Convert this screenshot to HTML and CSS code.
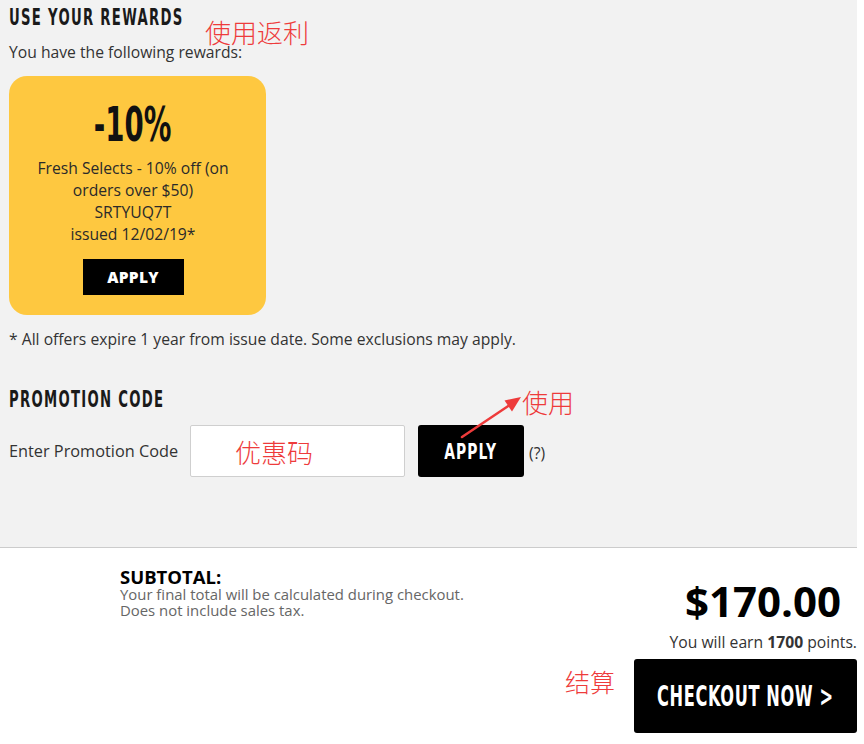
FILE: index.html
```html
<!DOCTYPE html>
<html lang="en">
<head>
<meta charset="utf-8">
<title>Cart</title>
<link rel="stylesheet" href="styles.css">
</head>
<body>
<div class="page">
  <section class="top">
    <h2 class="heading"><span class="cond cond-left">USE YOUR REWARDS</span></h2>
    <p class="intro">You have the following rewards:</p>
    <div class="card">
      <div class="pct"><span class="cond">-10%</span></div>
      <p class="desc">Fresh Selects - 10% off (on<br>orders over $50)<br>SRTYUQ7T<br>issued 12/02/19*</p>
      <button class="card-btn">APPLY</button>
    </div>
    <p class="note">* All offers expire 1 year from issue date. Some exclusions may apply.</p>
    <h2 class="heading promo-h"><span class="cond cond-left">PROMOTION CODE</span></h2>
    <div class="promo-row">
      <span class="label">Enter Promotion Code</span>
      <div class="input"><span class="ann ann-code">优惠码</span></div>
      <button class="promo-btn"><span class="cond">APPLY</span></button>
      <span class="help">(?)</span>
    </div>
    <span class="ann ann-rewards">使用返利</span>
    <span class="ann ann-use">使用</span>
    <svg class="arrow" width="70" height="50" viewBox="0 0 70 50">
      <line x1="7" y1="45" x2="54" y2="13.5" stroke="#ee3b3b" stroke-width="2.5" stroke-linecap="round"/>
      <polygon points="66,5 57,19.5 49.5,8.5" fill="#ee3b3b"/>
    </svg>
  </section>
  <section class="bottom">
    <div class="sub">
      <div class="sub-title">SUBTOTAL:</div>
      <div class="sub-text">Your final total will be calculated during checkout.<br>Does not include sales tax.</div>
    </div>
    <div class="totals">
      <div class="price">$170.00</div>
      <div class="earn">You will earn <b>1700</b> points.</div>
      <div class="checkout-row">
        <span class="ann-inline">结算</span>
        <button class="checkout"><span class="cond">CHECKOUT NOW &gt;</span></button>
      </div>
    </div>
  </section>
</div>
</body>
</html>
```

FILE: styles.css
```css
html, body {
  margin: 0;
  padding: 0;
  background: #ffffff;
}
body {
  font-family: "Open Sans", "DejaVu Sans", sans-serif;
  color: #222;
}
.page {
  width: 857px;
}
.top {
  position: relative;
  background: #f2f2f2;
  padding: 3px 9px 0;
  height: 544px;
  border-bottom: 1px solid #cccccc;
}
.cond {
  display: inline-block;
  font-family: "DejaVu Sans", sans-serif;
  font-stretch: condensed;
  font-weight: bold;
  white-space: nowrap;
  transform: scaleX(0.64);
  transform-origin: center;
}
.cond-left {
  transform-origin: left center;
}
.heading {
  margin: 0;
  font-size: 23px;
  line-height: 26px;
  letter-spacing: 2px;
  color: #1a1a1a;
  white-space: nowrap;
}
.intro {
  margin: 12px 0 0;
  font-size: 15.7px;
  line-height: 20px;
  color: #333;
}
.card {
  margin-top: 14px;
  width: 257px;
  height: 239px;
  box-sizing: border-box;
  background: #fec840;
  border-radius: 18px;
  display: flex;
  flex-direction: column;
  align-items: center;
  padding: 21px 9px 0 0;
}
.pct {
  font-size: 48px;
  line-height: 52px;
  color: #111;
}
.desc {
  margin: 7px 0 0;
  text-align: center;
  font-size: 15.7px;
  line-height: 22px;
  color: #2a2a2a;
}
.card-btn {
  margin-top: 14px;
  width: 101px;
  height: 36px;
  border: 0;
  background: #000;
  color: #fff;
  font-family: "Open Sans", "DejaVu Sans", sans-serif;
  font-weight: 800;
  font-size: 15.5px;
  letter-spacing: 0.3px;
  padding: 0;
}
.note {
  margin: 14px 0 0;
  font-size: 15.7px;
  line-height: 20px;
  color: #333;
}
.promo-h {
  margin-top: 36px;
}
.promo-row {
  margin-top: 13px;
  display: flex;
  align-items: center;
}
.label {
  font-size: 16.3px;
  color: #333;
  width: 181px;
}
.input {
  position: relative;
  width: 215px;
  height: 52px;
  box-sizing: border-box;
  background: #fff;
  border: 1px solid #cfcfcf;
  border-radius: 2px;
}
.promo-btn {
  margin-left: 13px;
  width: 106px;
  height: 52px;
  border: 0;
  border-radius: 3px;
  background: #000;
  color: #fff;
  font-size: 22px;
  letter-spacing: 1.5px;
  padding: 0;
  display: flex;
  align-items: center;
  justify-content: center;
}
.promo-btn .cond {
  transform: scaleX(0.7);
}
.help {
  margin-left: 5px;
  margin-top: 4px;
  font-size: 15.7px;
  color: #333;
}
.ann {
  position: absolute;
  font-family: "Noto Sans CJK SC", sans-serif;
  font-weight: 300;
  color: #ee3b3b;
  font-size: 26px;
  line-height: 30px;
  white-space: nowrap;
}
.ann-rewards {
  left: 205px;
  top: 17px;
}
.ann-use {
  left: 522px;
  top: 387px;
}
.ann-code {
  left: 44px;
  top: 11px;
}
.arrow {
  position: absolute;
  left: 455px;
  top: 392px;
}
.bottom {
  display: flex;
  justify-content: space-between;
  padding-left: 120px;
  padding-top: 20px;
}
.sub-title {
  font-weight: bold;
  font-size: 18.5px;
  line-height: 18px;
  color: #000;
}
.sub-text {
  font-size: 14.9px;
  line-height: 16px;
  color: #666;
}
.totals {
  display: flex;
  flex-direction: column;
  align-items: flex-end;
  padding-top: 8px;
}
.price {
  font-weight: bold;
  font-size: 42px;
  line-height: 50px;
  color: #000;
  padding-right: 16px;
}
.earn {
  margin-top: 7px;
  font-size: 15.7px;
  line-height: 18px;
  color: #333;
}
.checkout-row {
  margin-top: 8px;
  display: flex;
  align-items: center;
}
.ann-inline {
  font-family: "Noto Sans CJK SC", sans-serif;
  font-weight: 300;
  color: #ee3b3b;
  font-size: 25px;
  margin-right: 19px;
  margin-top: -30px;
}
.checkout {
  width: 223px;
  height: 74px;
  border: 0;
  border-radius: 3px;
  background: #000;
  color: #fff;
  font-size: 29px;
  letter-spacing: 1px;
  padding: 0;
  display: flex;
  align-items: center;
  justify-content: center;
  overflow: visible;
}
.checkout .cond {
  transform: scaleX(0.62);
}
```
